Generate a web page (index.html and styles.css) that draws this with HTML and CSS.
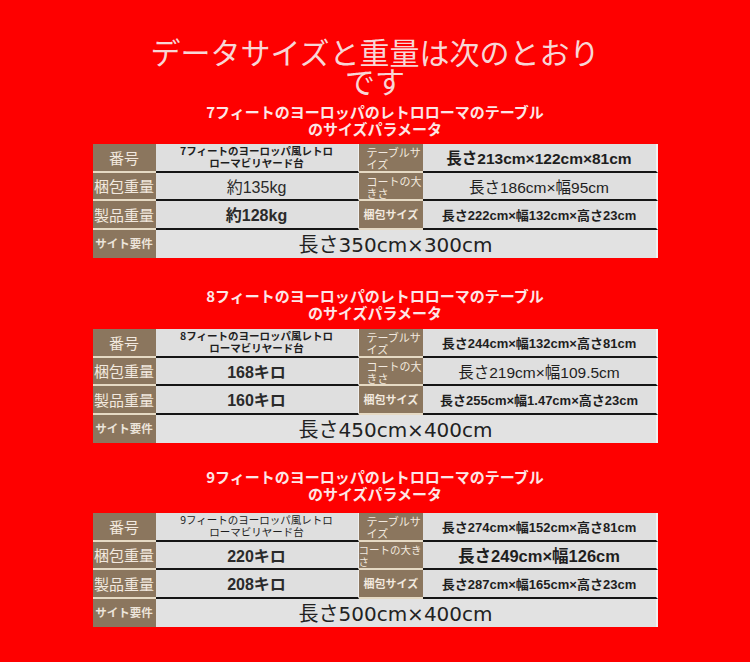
FILE: index.html
```html
<!DOCTYPE html>
<html lang="ja">
<head>
<meta charset="utf-8">
<title>データサイズと重量</title>
<link rel="stylesheet" href="styles.css">
</head>
<body>
<main class="page">
  <h1 class="title"><span class="title-line">データサイズと重量は次のとおり</span><span class="title-line">です</span></h1>

  <section class="spec spec-1">
    <h2 class="spec-title">7フィートのヨーロッパのレトロローマのテーブル<br>のサイズパラメータ</h2>
    <div class="table">
      <div class="lbl">番号</div>
      <div class="val val-name bold">7フィートのヨーロッパ風レトロ<br>ローマビリヤード台</div>
      <div class="lbl2">テーブルサイズ</div>
      <div class="val val-size b15">長さ213cm×122cm×81cm</div>

      <div class="lbl">梱包重量</div>
      <div class="val val-w">約135kg</div>
      <div class="lbl2">コートの大きさ</div>
      <div class="val val-size m15">長さ186cm×幅95cm</div>

      <div class="lbl">製品重量</div>
      <div class="val val-w bold">約128kg</div>
      <div class="lbl2 lbl2-b">梱包サイズ</div>
      <div class="val val-size b13">長さ222cm×幅132cm×高さ23cm</div>

      <div class="lbl lbl-site">サイト要件</div>
      <div class="val val-site">長さ350cm×300cm</div>
    </div>
  </section>

  <section class="spec spec-2">
    <h2 class="spec-title">8フィートのヨーロッパのレトロローマのテーブル<br>のサイズパラメータ</h2>
    <div class="table">
      <div class="lbl">番号</div>
      <div class="val val-name bold">8フィートのヨーロッパ風レトロ<br>ローマビリヤード台</div>
      <div class="lbl2">テーブルサイズ</div>
      <div class="val val-size b13">長さ244cm×幅132cm×高さ81cm</div>

      <div class="lbl">梱包重量</div>
      <div class="val val-w bold">168キロ</div>
      <div class="lbl2">コートの大きさ</div>
      <div class="val val-size m15">長さ219cm×幅109.5cm</div>

      <div class="lbl">製品重量</div>
      <div class="val val-w bold">160キロ</div>
      <div class="lbl2 lbl2-b">梱包サイズ</div>
      <div class="val val-size b13">長さ255cm×幅1.47cm×高さ23cm</div>

      <div class="lbl lbl-site">サイト要件</div>
      <div class="val val-site">長さ450cm×400cm</div>
    </div>
  </section>

  <section class="spec spec-3">
    <h2 class="spec-title">9フィートのヨーロッパのレトロローマのテーブル<br>のサイズパラメータ</h2>
    <div class="table">
      <div class="lbl">番号</div>
      <div class="val val-name">9フィートのヨーロッパ風レトロ<br>ローマビリヤード台</div>
      <div class="lbl2">テーブルサイズ</div>
      <div class="val val-size b13">長さ274cm×幅152cm×高さ81cm</div>

      <div class="lbl">梱包重量</div>
      <div class="val val-w bold">220キロ</div>
      <div class="lbl2 lbl2-tight">コートの大きさ</div>
      <div class="val val-size b16">長さ249cm×幅126cm</div>

      <div class="lbl">製品重量</div>
      <div class="val val-w bold">208キロ</div>
      <div class="lbl2 lbl2-b">梱包サイズ</div>
      <div class="val val-size b13">長さ287cm×幅165cm×高さ23cm</div>

      <div class="lbl lbl-site">サイト要件</div>
      <div class="val val-site">長さ500cm×400cm</div>
    </div>
  </section>
</main>
</body>
</html>
```

FILE: styles.css
```css
* {
  box-sizing: border-box;
  margin: 0;
  padding: 0;
}

html,
body {
  background: #fe0000;
}

body {
  width: 750px;
  height: 662px;
  overflow: hidden;
  font-family: "Noto Sans CJK JP", sans-serif;
}

.page {
  display: flex;
  flex-direction: column;
  align-items: center;
  padding-top: 36px;
}

.title {
  display: flex;
  flex-direction: column;
  align-items: center;
  font-size: 30px;
  font-weight: 400;
  line-height: 30px;
  color: #f8d6d6;
  text-align: center;
}

.title-line {
  display: block;
  height: 29px;
}

.spec {
  display: flex;
  flex-direction: column;
  align-items: center;
}

.spec-title {
  font-size: 15px;
  line-height: 17px;
  font-weight: 700;
  color: #fde6e6;
  text-align: center;
}

.spec-1 { margin-top: 9px; }
.spec-2 { margin-top: 29px; }
.spec-3 { margin-top: 25px; }

.table {
  margin-top: 7px;
  display: grid;
  grid-template-columns: 63px 203px 64px 235px;
  grid-auto-rows: 28.5px;
}

.spec-2 .table { margin-top: 8px; }
.spec-3 .table { margin-top: 11px; }

.lbl,
.lbl2 {
  background: #8b765e;
  color: #f2e9df;
  border-bottom: 2px solid #e6dac4;
}

.lbl {
  display: flex;
  align-items: center;
  justify-content: center;
  font-size: 15px;
  line-height: 1;
}

.lbl-site {
  font-size: 11.5px;
  font-weight: 700;
  border-bottom: none;
  color: #ece4da;
}

.lbl2 {
  font-size: 11px;
  line-height: 12px;
  padding: 2px 0 0 8px;
}

.lbl2-b {
  display: flex;
  align-items: center;
  padding: 0 0 0 5px;
  font-weight: 700;
}

.lbl2-tight {
  padding-left: 0;
  font-size: 10.5px;
}

.val {
  background: #dfdfdf;
  border-bottom: 2px solid #151515;
  color: #1e1e1e;
  font-family: "Liberation Sans", "Noto Sans CJK JP", sans-serif;
  display: flex;
  align-items: center;
  justify-content: center;
  text-align: center;
}

.val-name {
  font-size: 10.5px;
  line-height: 12px;
  border-right: 1px solid #f0f0f0;
  font-family: "Noto Sans CJK JP", sans-serif;
}

.val-w {
  font-size: 16px;
  border-right: 1px solid #f0f0f0;
  color: #2a2a2a;
}

.val-size {
  border-right: 2px solid #f2f2f2;
}

.val-site {
  grid-column: span 3;
  border-bottom: none;
  border-right: 2px solid #f2f2f2;
  background: #e2e2e2;
  font-family: "DejaVu Sans", "Noto Sans CJK JP", sans-serif;
  font-size: 20px;
  color: #222;
  padding-right: 20px;
}

.bold { font-weight: 700; }

.b15 { font-size: 15.5px; font-weight: 700; }
.b16 { font-size: 16.5px; font-weight: 700; }
.m15 { font-size: 15.5px; }
.b13 { font-size: 13px; font-weight: 700; }
```
